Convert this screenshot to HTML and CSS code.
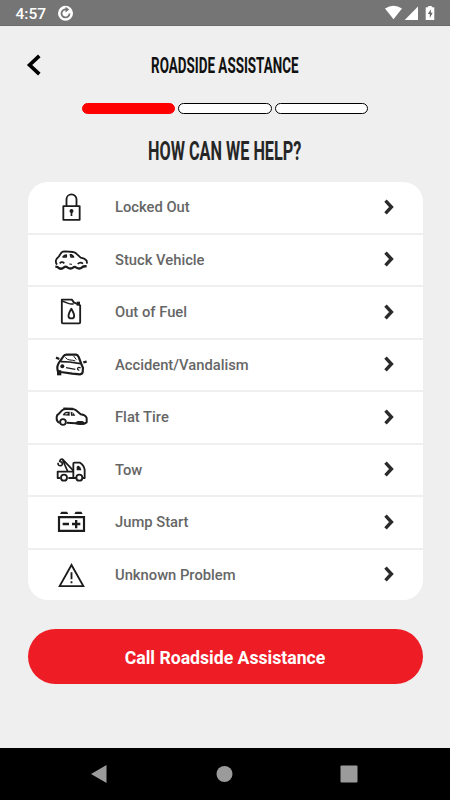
FILE: index.html
```html
<!DOCTYPE html>
<html lang="en">
<head>
    <meta charset="UTF-8">
    <meta name="viewport" content="width=device-width, initial-scale=1.0">
    <title>Roadside Assistance</title>
    <link rel="stylesheet" href="styles.css">
</head>
<body>
    <div class="status-bar">
        <span class="time">4:57</span>
        <svg class="sync" viewBox="0 0 16 16" width="16" height="16">
            <circle cx="7.500" cy="8.300" r="7.500" fill="#fff"/>
            <path d="M8 4.500A4 4 0 1 0 11.500 8.500" fill="none" stroke="#757575" stroke-width="1.800"/>
            <path d="M7.500 1.800l3.800 2.700-3.800 2.900z" fill="#757575"/>
        </svg>
        <div class="status-icons">
            <svg viewBox="0 0 50 26" width="50" height="26">
                <path d="M0 8.500Q8.500 2.900 17 8.500L8.500 19.200z" fill="#fff"/>
                <path d="M19.700 19.900H33V6.400z" fill="#fff"/>
                <path d="M41.300 7.200h1.900V5.900h3.600v1.300h1.900q.6 0 .6.600v11.600q0 .6-.6.6h-7.400q-.6 0-.6-.6V7.800q0-.6.600-.6z" fill="#fff"/>
                <path d="M46 9.200l-3.200 4.900h2v3.800l2.900-5.100h-1.900z" fill="#666"/>
            </svg>
        </div>
    </div>

    <header class="header">
        <button class="back" aria-label="Back">
            <svg viewBox="0 0 16 24" width="16" height="24">
                <path d="M13.300 2.800L3.600 12l9.700 9.200" fill="none" stroke="#000" stroke-width="3.700"/>
            </svg>
        </button>
        <h1>ROADSIDE ASSISTANCE</h1>
    </header>

    <div class="steps">
        <span class="step active"></span>
        <span class="step"></span>
        <span class="step"></span>
    </div>

    <h2>HOW CAN WE HELP?</h2>

    <ul class="options">
        <li>
            <svg class="icon" viewBox="0 0 108 108">
                <path d="M31 51.500h49v41H31z"/>
                <path d="M40.500 51V31a15 15 0 0 1 30 0v20"/>
                <circle class="solid" cx="55.500" cy="66" r="6"/>
                <path class="solid" d="M53 66h5v15h-5z"/>
            </svg>
            <span>Locked Out</span>
            <svg class="arrow" viewBox="0 0 12 18"><path d="M2.500 2.700l5.900 6.300-5.900 6.300"/></svg>
        </li>
        <li>
            <svg class="icon" viewBox="0 0 108 108">
                <path d="M12 68C6 60 8 50 17 44L26 31Q29 28 36 28l24 2q4 0 9 4l14 13q13 2 18 9l1 9"/>
                <path d="M30 45q4-6 9-6h1v6zM52 38h3q5 3 7 7H54z" stroke-width="4.500"/>
                <path d="M20 64q7-7 14 0M74 66q8-8 16-1" stroke-width="5"/>
                <path d="M49 66l8 1" stroke-width="3"/>
                <path d="M7 74q8 0 10 4 8 5 16-2 5-4 10 0 10 7 18 0 4-3 8 0 10 7 18 0 4-4 14-3" stroke-width="7"/>
            </svg>
            <span>Stuck Vehicle</span>
            <svg class="arrow" viewBox="0 0 12 18"><path d="M2.500 2.700l5.900 6.300-5.900 6.300"/></svg>
        </li>
        <li>
            <svg class="icon" viewBox="0 0 108 108">
                <path d="M26.500 17h30l6 8 10 5h5l4 5v50q0 3-3 3H29.500q-3 0-3-3z"/>
                <path d="M27 21l19 7q8 3 16 1" stroke-width="4.500"/>
                <path class="solid" d="M71 23h10v12H71z"/>
                <path d="M55 44q-17 29 0 29t0-29z"/>
            </svg>
            <span>Out of Fuel</span>
            <svg class="arrow" viewBox="0 0 12 18"><path d="M2.500 2.700l5.900 6.300-5.900 6.300"/></svg>
        </li>
        <li>
            <svg class="icon" viewBox="0 0 108 108">
                <path d="M20 44l12-17q3-4 9-4h28q6 1 8 7l8 21 5 12-1 12q-1 6-8 7L58 80l-35-5-9-4q-4-14 6-27z" stroke-width="6.500"/>
                <path d="M24 44l25 1 34 5" stroke-width="5"/>
                <path d="M37 31q5 8 14 8t16 3M62 27l8 11" stroke-width="3"/>
                <path d="M39 62l28 5" stroke-width="4"/>
                <path d="M79 70q-7-1-5-6t9-1" stroke-width="4"/>
                <circle class="solid" cx="28" cy="58" r="6"/>
                <path d="M9 32l10 4M91 46l10-2" stroke-width="7"/>
                <path d="M12 70h13v15H12z" class="solid"/>
            </svg>
            <span>Accident/Vandalism</span>
            <svg class="arrow" viewBox="0 0 12 18"><path d="M2.500 2.700l5.900 6.300-5.900 6.300"/></svg>
        </li>
        <li>
            <svg class="icon" viewBox="0 0 108 108">
                <path d="M20 71q-10-2-9-17 0-6 7-10l9-10q4-4 12-4h20q5 0 10 4l14 12q15 2 18 11v13l-7 4-53-3" stroke-width="6"/>
                <path d="M31 29l29 1" stroke-width="7"/>
                <path class="solid" d="M29 49q4-12 14-11h7v12zM53 38q9 1 14 12H54z"/>
                <path d="M37 45h6v-2zM58 44v1h2z" fill="#fff" stroke="#fff" stroke-width="1.500"/>
                <circle cx="30" cy="69" r="8.500" fill="#fff"/>
                <path d="M67 75q1-9 9-9h12q7 1 9 9-14 6-30 0z" class="solid"/>
            </svg>
            <span>Flat Tire</span>
            <svg class="arrow" viewBox="0 0 12 18"><path d="M2.500 2.700l5.900 6.300-5.900 6.300"/></svg>
        </li>
        <li>
            <svg class="icon" viewBox="0 0 108 108">
                <path d="M21 78h-7V59h47v19H46M61 59V35q0-3 3-3h17q12 8 14 21v25h-5M61 78h9"/>
                <path d="M15 32q0 11 9 9 7-3 2-10l-6-3q2-8 9-6l32 34M29 24l15 34" stroke-width="5"/>
                <circle cx="33" cy="77" r="9"/>
                <circle cx="79" cy="77" r="9"/>
                <path class="solid" d="M71 55V45q1-4 6-4 7 4 8 14z"/>
            </svg>
            <span>Tow</span>
            <svg class="arrow" viewBox="0 0 12 18"><path d="M2.500 2.700l5.900 6.300-5.900 6.300"/></svg>
        </li>
        <li>
            <svg class="icon sharp" viewBox="0 0 108 108">
                <path d="M18 39.500h75v41H18z" stroke-width="6.500"/>
                <path d="M21 30l4-7h17l4 7zM64 30l4-7h17l4 7z" class="solid"/>
                <path d="M29 60h19M57 60h25M69.500 48v25" stroke-width="7"/>
            </svg>
            <span>Jump Start</span>
            <svg class="arrow" viewBox="0 0 12 18"><path d="M2.500 2.700l5.900 6.300-5.900 6.300"/></svg>
        </li>
        <li>
            <svg class="icon sharp" viewBox="0 0 108 108">
                <path d="M55.500 24L20 87.500h71z"/>
                <path d="M55.500 46v21M55.500 73v6"/>
            </svg>
            <span>Unknown Problem</span>
            <svg class="arrow" viewBox="0 0 12 18"><path d="M2.500 2.700l5.900 6.300-5.900 6.300"/></svg>
        </li>
    </ul>

    <button class="call">Call Roadside Assistance</button>

    <nav class="nav-bar">
        <svg viewBox="0 0 18 20" width="18" height="20"><path d="M1 10L16.500 1v18z"/></svg>
        <svg viewBox="0 0 18 18" width="18" height="18"><circle cx="9.500" cy="9" r="8"/></svg>
        <svg viewBox="0 0 18 18" width="18" height="18"><rect x=".5" y=".5" width="17" height="17" rx="1"/></svg>
    </nav>
</body>
</html>
```
FILE: styles.css
```css
* {
    box-sizing: border-box;
}
body {
    margin: 0;
    width: 450px;
    height: 800px;
    display: flex;
    flex-direction: column;
    background: #efefef;
    font-family: Roboto, sans-serif;
    overflow: hidden;
}
h1, h2, ul {
    margin: 0;
    padding: 0;
}
button {
    border: none;
    background: none;
    padding: 0;
    font-family: inherit;
}
svg {
    display: block;
    flex: none;
}
.status-bar {
    height: 26px;
    background: #757575;
    color: #fff;
    display: flex;
    align-items: center;
    padding: 0 15px 0 15.500px;
    border-bottom: 1px solid #6a6a6a;
}
.time {
    width: 42.500px;
    font-size: 15.500px;
    font-weight: 500;
    line-height: 26px;
    padding-top: 2px;
}
.status-icons {
    height: 26px;
    margin-left: auto;
}
.header {
    height: 76px;
    padding-top: 1px;
    display: grid;
    grid-template-columns: 60px 1fr 60px;
    align-items: center;
    justify-items: center;
}
.back {
    margin-left: 7px;
}
h1, h2 {
    font-weight: 700;
    white-space: nowrap;
}
h1 {
    padding-top: 2px;
    font-size: 22px;
    line-height: 26px;
    color: #111;
    transform: scaleX(.61);
}
.steps {
    display: flex;
    gap: 3px;
    margin: 1px auto 0;
}
.step {
    width: 93.500px;
    height: 11px;
    border: 1px solid #000;
    border-radius: 6px;
    background: #fff;
}
.step.active {
    background: #f00;
    border-color: #f00;
}
h2 {
    align-self: center;
    margin-top: 21px;
    font-size: 26px;
    line-height: 32px;
    color: #262626;
    transform: scaleX(.625);
}
.options {
    list-style: none;
    width: 395px;
    margin: 15px auto 0;
    display: grid;
    gap: 2px;
    border-radius: 20px;
    overflow: hidden;
}
.options li {
    height: 50.500px;
    display: flex;
    align-items: center;
    padding: 0 27.500px 0 25.500px;
    background: #fff;
    font-size: 14.750px;
    font-weight: 500;
    color: #666;
}
.icon {
    width: 36px;
    height: 36px;
    margin-right: 26px;
    fill: none;
    stroke: #1c1c1c;
    stroke-width: 5.500;
    stroke-linejoin: round;
}
.icon.sharp {
    stroke-linejoin: miter;
}
.icon .solid {
    fill: #1c1c1c;
    stroke: none;
}
.arrow {
    width: 12px;
    height: 18px;
    margin-left: auto;
    margin-top: -1px;
    fill: none;
    stroke: #2b2b2b;
    stroke-width: 3.400;
}
.call {
    width: 395px;
    height: 55px;
    margin: 29px auto 0;
    padding-top: 2px;
    border-radius: 28px;
    background: #ee1c25;
    color: #fff;
    font-size: 17.650px;
    font-weight: 700;
}
.nav-bar {
    height: 52px;
    margin-top: auto;
    background: #000;
    display: flex;
    align-items: center;
    justify-content: space-between;
    padding: 0 92px 0 90px;
    fill: #9b9b9b;
}
```
